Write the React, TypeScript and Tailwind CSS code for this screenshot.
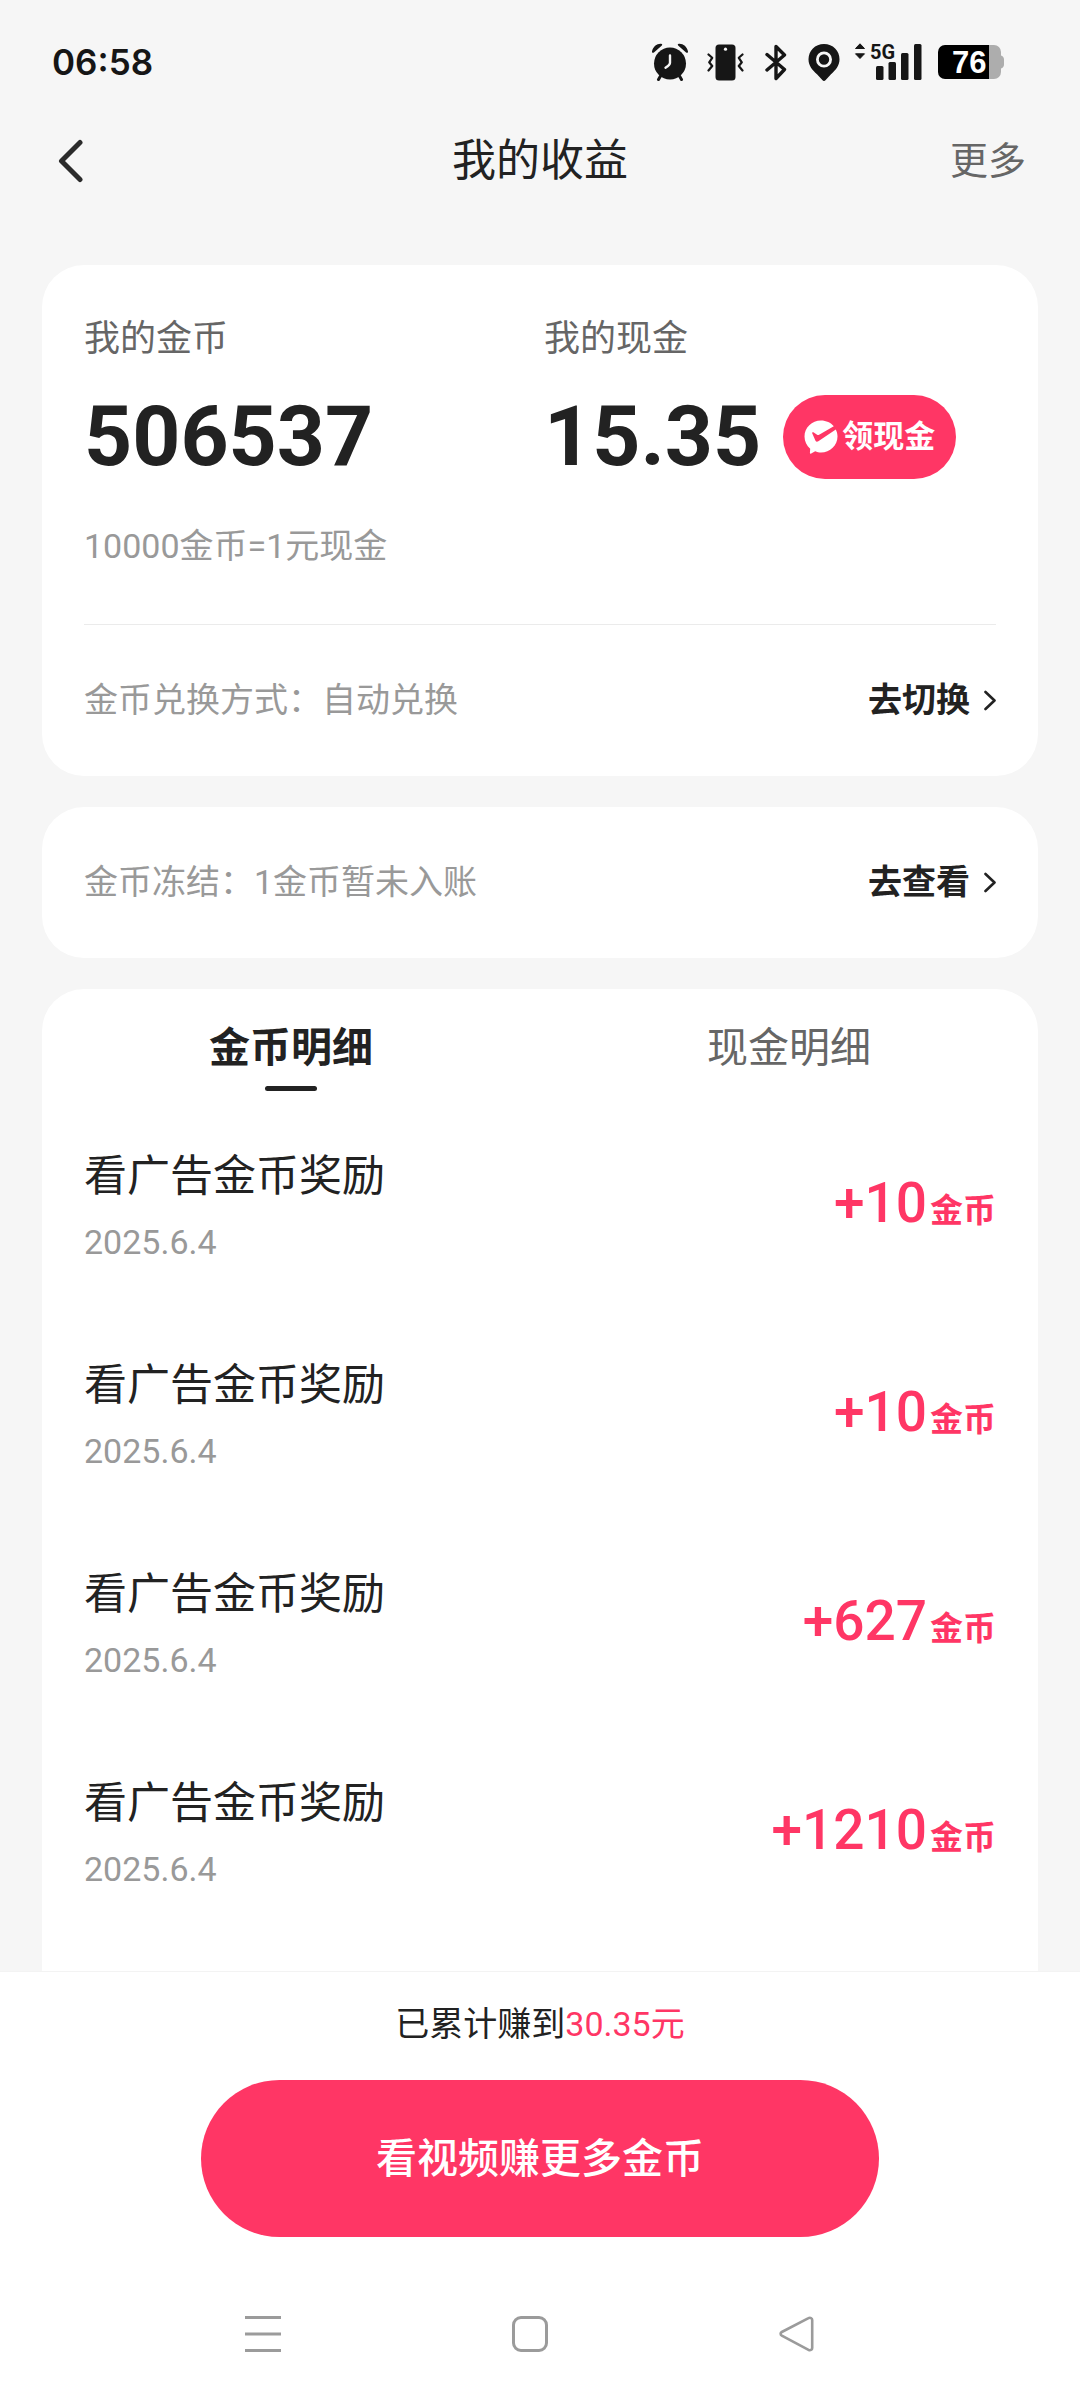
import { useState } from 'react';

const RECORDS = [
  { id: 1, title: '看广告金币奖励', date: '2025.6.4', amount: 10 },
  { id: 2, title: '看广告金币奖励', date: '2025.6.4', amount: 10 },
  { id: 3, title: '看广告金币奖励', date: '2025.6.4', amount: 627 },
  { id: 4, title: '看广告金币奖励', date: '2025.6.4', amount: 1210 },
];

const TABS = [
  { key: 'coin', label: '金币明细' },
  { key: 'cash', label: '现金明细' },
];

function AlarmIcon() {
  return (
    <svg width="38" height="38" viewBox="0 0 38 38" fill="#161616" aria-hidden="true">
      <path d="M1 8.500C2 3.500 6 .5 10 .8c1.500.1 1.600 1 .6 1.900L3.200 9.200C2 10.200.8 9.800 1 8.500ZM37 8.500C36 3.500 32 .5 28 .8c-1.500.1-1.600 1-.6 1.900l7.400 6.500c1.200 1 2.400.6 2.200-.7Z" />
      <circle cx="19" cy="20.500" r="16" />
      <path d="M9.500 33 7.500 36.500M28.500 33l2 3.500" stroke="#161616" strokeWidth="3" strokeLinecap="round" />
      <path d="M19 12.500v7.200c0 1.600-1.600 3.200-4.500 5" stroke="#f6f6f6" strokeWidth="2.400" strokeLinecap="round" fill="none" />
    </svg>
  );
}

function VibrateIcon() {
  return (
    <svg width="40" height="37" viewBox="0 0 40 37" fill="none" aria-hidden="true">
      <rect x="8.500" y="0.500" width="20" height="36" rx="3.500" fill="#161616" />
      <circle cx="18.500" cy="5.200" r="1.600" fill="#f6f6f6" />
      <path d="m1.500 10.500 3.700 3.300-3 4.500 3 3.700-3.700 4.500M35.500 10.500l-3.700 3.300 3 4.500-3 3.700 3.700 4.500" stroke="#161616" strokeWidth="2.200" strokeLinecap="round" strokeLinejoin="round" />
    </svg>
  );
}

function BluetoothIcon() {
  return (
    <svg width="25" height="37" viewBox="0 0 25 37" fill="none" aria-hidden="true">
      <path d="m2 10.500 17.500 15-8.500 9v-32l8.500 8.500L2 26" stroke="#161616" strokeWidth="3.400" strokeLinecap="round" strokeLinejoin="round" />
    </svg>
  );
}

function PinIcon() {
  return (
    <svg width="32" height="37" viewBox="0 0 32 37" aria-hidden="true">
      <path d="M16 0C7 0 .5 6.800.5 15.300c0 6.700 4 10.700 8.500 15l5.300 5.700c1.100 1.200 2.300 1.200 3.400 0L23 30.300c4.500-4.300 8.500-8.300 8.500-15C31.500 6.800 25 0 16 0Z" fill="#161616" />
      <circle cx="16" cy="15.500" r="6.600" fill="none" stroke="#f6f6f6" strokeWidth="2.800" />
    </svg>
  );
}

function SignalIcon() {
  return (
    <svg width="68" height="50" viewBox="0 -6 68 50" fill="#161616" aria-hidden="true">
      <path d="M6 .8 10.500 5.500h-9ZM6 15.500 10.500 10.800h-9Z" stroke="#161616" strokeWidth="1" strokeLinejoin="round" />
      <text x="16" y="15.500" fontFamily="Roboto" fontSize="20" fontWeight="700">5G</text>
      <rect x="22" y="23" width="7.500" height="14" rx="1.500" />
      <rect x="34.500" y="19" width="7.500" height="18" rx="1.500" />
      <rect x="47" y="10" width="7.500" height="27" rx="1.500" />
      <rect x="60" y="1" width="7.500" height="36" rx="1.500" />
    </svg>
  );
}

function BatteryIcon() {
  return (
    <svg width="66" height="34" viewBox="0 0 66 34" aria-hidden="true">
      <path d="M51 0h5a7 7 0 0 1 7 7v3.500c1.800.6 3 1.800 3 4v5c0 2.200-1.200 3.400-3 4V27a7 7 0 0 1-7 7h-5Z" fill="#adadad" />
      <path d="M7 0h44v34H7a7 7 0 0 1-7-7V7a7 7 0 0 1 7-7Z" fill="#000" />
      <text x="14" y="28" fontFamily="Liberation Sans" fontSize="31" fontWeight="700" fill="#fff">76</text>
    </svg>
  );
}

function WechatPayIcon() {
  return (
    <svg width="34" height="34" viewBox="0 0 34 34" aria-hidden="true">
      <path d="M17 .5C7.900.5.5 7.700.5 16.500c0 4.900 2.200 9.300 5.700 12.200l-.3 4.100c0 .9.600 1.200 1.300.8l4-2.400c1.800.7 3.800 1.300 5.800 1.300 9.100 0 16.500-7.200 16.500-16 0-2.600-.6-5-1.700-7.100L14.300 21.300c-1.200.7-2.200.5-2.800-.6L8.200 13.300c-.3-.8.500-1.400 1.200-1l3.700 2.400c.6.4 1.300.4 2 .1L29.800 6.200C26.800 2.700 22.200.5 17 .5Z" fill="#fff" />
    </svg>
  );
}

function Chevron() {
  return (
    <svg width="12" height="22" viewBox="0 0 12 22" fill="none" aria-hidden="true">
      <path d="m1.500 3 9 8.500-9 8.500" stroke="#222" strokeWidth="2.600" strokeLinecap="round" strokeLinejoin="round" />
    </svg>
  );
}

function InfoRow({ text, action }: { text: string; action: string }) {
  return (
    <div className="flex h-[151px] items-center justify-between pb-[2px] text-[34px] leading-[48px]">
      <p className="text-[#999999]">{text}</p>
      <button className="flex items-center gap-[14px] font-bold text-[#222222]">
        {action}
        <Chevron />
      </button>
    </div>
  );
}

export default function App() {
  const [tab, setTab] = useState('coin');

  return (
    <div className="flex h-screen flex-col bg-[#f6f6f6] font-['Roboto','Noto_Sans_CJK_SC',sans-serif] text-[#222222]">
      <div className="flex h-[124px] shrink-0 items-center justify-between pr-[76px] pl-[52px]">
        <span className="font-['Inter',sans-serif] text-[35px] leading-[48px] font-semibold text-[#161616]">06:58</span>
        <div className="flex items-center">
          <div className="flex items-center gap-[18px]">
            <AlarmIcon />
            <VibrateIcon />
            <BluetoothIcon />
            <PinIcon />
          </div>
          <div className="ml-[14px] flex items-center gap-[16px]">
            <SignalIcon />
            <BatteryIcon />
          </div>
        </div>
      </div>

      <header className="grid h-[73px] shrink-0 grid-cols-3 items-center px-[54px]">
        <button aria-label="返回" className="justify-self-start">
          <svg width="34" height="44" viewBox="0 0 34 44" fill="none" aria-hidden="true">
            <path d="M26 3.500 7.500 22 26 40.500" stroke="#2b2b2b" strokeWidth="5" strokeLinecap="round" strokeLinejoin="round" />
          </svg>
        </button>
        <h1 className="text-center text-[44px] leading-[56px]">我的收益</h1>
        <button className="justify-self-end text-[38px] leading-[56px] text-[#666666]">更多</button>
      </header>

      <main className="flex min-h-0 flex-1 flex-col gap-[31px] overflow-hidden px-[42px] pt-[68px]">
        <section className="shrink-0 rounded-[42px] bg-white px-[42px]">
          <div className="grid grid-cols-[460fr_452fr] pt-[50px]">
            <div>
              <p className="text-[36px] leading-[48px] text-[#666666]">我的金币</p>
              <p className="mt-[32px] text-[84px] leading-[84px] font-bold">506537</p>
            </div>
            <div>
              <p className="text-[36px] leading-[48px] text-[#666666]">我的现金</p>
              <div className="mt-[32px] flex items-center gap-[22px]">
                <span className="text-[84px] leading-[84px] font-bold">15.35</span>
                <button className="flex h-[84px] items-center gap-[4px] rounded-full bg-[#ff3665] px-[21px] text-[31px] font-bold text-white">
                  <WechatPayIcon />
                  领现金
                </button>
              </div>
            </div>
          </div>
          <p className="mt-[43px] border-b border-[#ebebeb] pb-[54px] text-[34px] leading-[48px] text-[#999999]">10000金币=1元现金</p>
          <InfoRow text="金币兑换方式：自动兑换" action="去切换" />
        </section>

        <section className="shrink-0 rounded-[42px] bg-white px-[42px]">
          <InfoRow text="金币冻结：1金币暂未入账" action="去查看" />
        </section>

        <section className="flex-1 rounded-t-[42px] bg-white">
          <div role="tablist" className="grid grid-cols-2 pt-[31px]">
            {TABS.map((t) => (
              <button
                key={t.key}
                role="tab"
                aria-selected={tab === t.key}
                onClick={() => setTab(t.key)}
                className={`flex flex-col items-center gap-[10px] text-[41px] leading-[56px] ${tab === t.key ? 'font-bold' : 'text-[#666666]'}`}
              >
                {t.label}
                {tab === t.key && <span className="h-[5px] w-[52px] rounded-full bg-[#222222]" />}
              </button>
            ))}
          </div>
          <ul className="px-[42px] pt-[13px]">
            {RECORDS.map((r) => (
              <li key={r.id} className="flex h-[209px] items-center justify-between">
                <div>
                  <p className="text-[43px] leading-[50px]">{r.title}</p>
                  <p className="mt-[17px] text-[34px] leading-[48px] text-[#999999]">{r.date}</p>
                </div>
                <p className="flex items-baseline gap-[3px] pb-[11px] text-[#ff3665]">
                  <span className="text-[55px] leading-[64px] font-medium">+{r.amount}</span>
                  <span className="text-[33px] leading-[48px] font-bold">金币</span>
                </p>
              </li>
            ))}
          </ul>
        </section>
      </main>

      <footer className="shrink-0 border-t border-[#f3f3f3] bg-white pt-[28px]">
        <p className="text-center text-[34px] leading-[48px]">
          已累计赚到<span className="text-[#ff3665]">30.35元</span>
        </p>
        <div className="mt-[32px] px-[201px]">
          <button className="h-[157px] w-full rounded-full bg-[#ff3665] text-[41px] leading-[56px] font-medium text-white">看视频赚更多金币</button>
        </div>
        <nav className="mt-[31px] grid h-[132px] grid-cols-3 place-items-center pr-[149px] pl-[129px]">
          <button aria-label="最近任务">
            <svg width="36" height="36" viewBox="0 0 36 36" aria-hidden="true">
              <path d="M0 1.500h36M0 18h36M0 34.500h36" stroke="#9b9b9b" strokeWidth="3" />
            </svg>
          </button>
          <button aria-label="主屏幕">
            <svg width="36" height="36" viewBox="0 0 36 36" aria-hidden="true">
              <rect x="1.500" y="1.500" width="33" height="33" rx="7.500" fill="none" stroke="#9b9b9b" strokeWidth="3" />
            </svg>
          </button>
          <button aria-label="返回上一页">
            <svg width="36" height="36" viewBox="0 0 36 36" aria-hidden="true">
              <path d="M29.500 2.200 2.800 16c-1.600.9-1.600 2.700 0 3.600l26.700 14.200c1.800 1 3.700 0 3.700-1.900V4.100c0-1.900-1.900-2.900-3.700-1.900Z" fill="none" stroke="#9b9b9b" strokeWidth="2.600" />
            </svg>
          </button>
        </nav>
      </footer>
    </div>
  );
}
